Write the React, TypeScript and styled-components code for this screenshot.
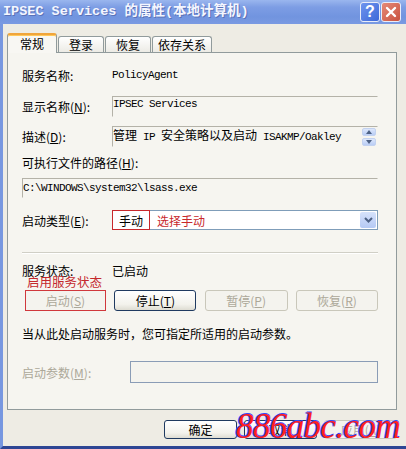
import React from 'react';
import styled, { createGlobalStyle, css } from 'styled-components';

const GlobalStyle = createGlobalStyle`
  html, body { margin: 0; padding: 0; background: #eeece4; }
  body {
    font-family: "Noto Sans CJK SC", "Liberation Sans", sans-serif;
    font-size: 12px;
    color: #000;
  }
  #root { width: 406px; height: 449px; }
`;

const Window = styled.div`
  position: relative;
  width: 406px;
  height: 449px;
  display: flex;
  flex-direction: column;
  overflow: hidden;
  background: #eeece4;
`;

const TitleBar = styled.div`
  height: 24px;
  flex: none;
  display: flex;
  align-items: center;
  padding: 0 5px 0 3px;
  background: linear-gradient(#9ab6ee 0%, #7d9de4 30%, #7194df 70%, #7a9ae2 100%);
`;

const TitleText = styled.div`
  flex: 1;
  font-family: "Liberation Mono", "Noto Sans CJK SC", monospace;
  font-size: 13.5px;
  font-weight: bold;
  color: #f4f6ff;
  text-shadow: 1px 1px 0 #5a72b8;
  white-space: nowrap;
  line-height: 24px;
`;

const CapButton = styled.div<{ $kind: 'help' | 'close' }>`
  width: 18px;
  height: 18px;
  margin-left: 1px;
  border: 1px solid #e8ecf8;
  border-radius: 3px;
  display: flex;
  align-items: center;
  justify-content: center;
  color: #fff;
  font-family: "Liberation Sans", sans-serif;
  font-weight: bold;
  font-size: 16px;
  ${(p) =>
    p.$kind === 'help'
      ? css`background: linear-gradient(135deg, #6f95ee, #3c68d8);`
      : css`background: linear-gradient(135deg, #e58a78, #c9523f);`}
`;

const Frame = styled.div`
  flex: 1;
  display: flex;
  flex-direction: column;
  border-left: 3px solid #7797e0;
  border-bottom: 3px solid #2e4694;
  padding: 9px 9px 0 4px;
`;

const TabBar = styled.div`
  display: flex;
  align-items: flex-end;
  height: 20px;
  margin-bottom: -1px;
  position: relative;
  z-index: 1;
`;

const Tab = styled.div<{ $active?: boolean; $w: number }>`
  box-sizing: border-box;
  width: ${(p) => p.$w}px;
  margin-right: 1px;
  border: 1px solid #919b9c;
  border-bottom: none;
  border-radius: 3px 3px 0 0;
  display: flex;
  align-items: center;
  justify-content: center;
  font-size: 12px;
  ${(p) =>
    p.$active
      ? css`
          height: 20px;
          background: #f8f7f3;
          border-top: 2px solid #f0a53c;
          box-shadow: inset 0 1px 0 #ffc85a;
          padding-bottom: 2px;
        `
      : css`
          height: 16px;
          background: linear-gradient(#ffffff, #ecebe5);
          margin-bottom: 1px;
        `}
`;

const Panel = styled.div`
  box-sizing: border-box;
  height: 358px;
  border: 1px solid #919b9c;
  background: #f6f5f0;
  display: flex;
  flex-direction: column;
  padding: 0 18px 0 14px;
  position: relative;
`;

const Row = styled.div<{ $mt: number; $h: number }>`
  display: flex;
  align-items: center;
  margin-top: ${(p) => p.$mt}px;
  height: ${(p) => p.$h}px;
  flex: none;
`;

const Label = styled.div<{ $w?: number; $disabled?: boolean }>`
  width: ${(p) => (p.$w ? `${p.$w}px` : 'auto')};
  flex: none;
  white-space: nowrap;
  color: ${(p) => (p.$disabled ? '#aca899' : '#000')};
`;

const Mono = styled.span`
  font-family: "Liberation Mono", monospace;
  font-size: 11px;
  letter-spacing: -0.6px;
`;

const ReadBox = styled.div<{ $align?: 'top' | 'center' }>`
  flex: 1;
  align-self: stretch;
  box-sizing: border-box;
  border: 1px solid;
  border-color: #b4b2a8 #f6f5f0 #f6f5f0 #b4b2a8;
  display: flex;
  align-items: ${(p) => (p.$align === 'top' ? 'flex-start' : 'center')};
  padding: ${(p) => (p.$align === 'top' ? '1px 0 0 0' : '0')};
  white-space: nowrap;
  position: relative;
`;

const Spin = styled.div`
  position: absolute;
  right: 1px;
  top: 1px;
  display: flex;
  flex-direction: column;
  gap: 2px;
`;

const SpinBtn = styled.div`
  width: 14px;
  height: 8px;
  border-radius: 2px;
  background: linear-gradient(#dde7fb, #b9cdf5);
  border: 1px solid #c3d2f0;
  box-sizing: border-box;
  display: flex;
  align-items: center;
  justify-content: center;
`;

const Combo = styled.div`
  flex: 1;
  align-self: stretch;
  box-sizing: border-box;
  border: 1px solid #7f9db9;
  background: #fff;
  display: flex;
  align-items: stretch;
`;

const Marked = styled.div`
  border: 1px solid #c8282c;
  margin: -1px 0 -1px -1px;
  width: 36px;
  display: flex;
  align-items: center;
  justify-content: center;
`;

const RedText = styled.span`
  color: #c8282c;
  font-size: 12px;
`;

const ComboText = styled.div`
  flex: 1;
  display: flex;
  align-items: center;
  padding-left: 7px;
`;

const ComboArrow = styled.div`
  width: 16px;
  margin: 1px;
  border-radius: 2px;
  background: linear-gradient(#d6e2fb, #b5c9f4);
  display: flex;
  align-items: center;
  justify-content: center;
`;

const Separator = styled.div<{ $mt: number }>`
  margin-top: ${(p) => p.$mt}px;
  height: 1px;
  border-bottom: 1px solid #ffffff;
  background: #d0cfc6;
  flex: none;
`;

const Annotation = styled.div`
  position: absolute;
  left: 19px;
  top: 221px;
  color: #c4282c;
  font-size: 12.5px;
  line-height: 16px;
`;

const ButtonRow = styled.div`
  display: flex;
  justify-content: space-between;
  margin: 12px 0 0 3px;
  height: 21px;
  flex: none;
`;

const Btn = styled.div<{ $w: number; $disabled?: boolean; $mark?: boolean }>`
  box-sizing: border-box;
  width: ${(p) => p.$w}px;
  height: 100%;
  border-radius: 3px;
  display: flex;
  align-items: center;
  justify-content: center;
  font-size: 12px;
  ${(p) =>
    p.$disabled
      ? css`
          border: 1px solid #c9c7ba;
          color: #aca899;
          background: #f4f3ee;
        `
      : css`
          border: 1px solid #1f3a60;
          color: #000;
          background: linear-gradient(#ffffff 0%, #f3f2ec 70%, #dedcd2 100%);
        `}
  ${(p) =>
    p.$mark &&
    css`
      border: 1px solid #d0383c;
      border-radius: 0;
    `}
`;

const ParamBox = styled.div`
  margin-left: 42px;
  flex: 1;
  align-self: stretch;
  box-sizing: border-box;
  border: 1px solid #8a9cb6;
  background: #f4f3ee;
`;

const ButtonBar = styled.div`
  display: flex;
  justify-content: flex-end;
  gap: 7px;
  margin-top: 10px;
  height: 19px;
`;

const Watermark = styled.div`
  position: absolute;
  left: 236px;
  top: 407px;
  font-family: "Liberation Serif", serif;
  font-style: italic;
  font-size: 35px;
  line-height: 40px;
  letter-spacing: -0.6px;
  color: #ff2020;
  text-shadow: -1.5px 0 0 #3448ff, 0 -1px 0 #3448ff;
  pointer-events: none;
  white-space: nowrap;
`;

const Acc = ({ k }: { k: string }) => (
  <>
    (<u>{k}</u>)
  </>
);

export default function App() {
  return (
    <>
      <GlobalStyle />
      <Window>
        <TitleBar>
          <TitleText>IPSEC Services 的属性(本地计算机)</TitleText>
          <CapButton $kind="help">?</CapButton>
          <CapButton $kind="close">
            <svg width="12" height="12" viewBox="0 0 12 12">
              <path d="M2 2 L10 10 M10 2 L2 10" stroke="#fff" strokeWidth="2.4" strokeLinecap="round" />
            </svg>
          </CapButton>
        </TitleBar>
        <Frame>
          <TabBar>
            <Tab $active $w={50}>常规</Tab>
            <Tab $w={46}>登录</Tab>
            <Tab $w={46}>恢复</Tab>
            <Tab $w={60}>依存关系</Tab>
          </TabBar>
          <Panel>
            <Row $mt={14} $h={16}>
              <Label $w={90}>服务名称:</Label>
              <Mono>PolicyAgent</Mono>
            </Row>
            <Row $mt={13} $h={21}>
              <Label $w={90}>
                显示名称<Acc k="N" />:
              </Label>
              <ReadBox $align="top">
                <Mono>IPSEC Services</Mono>
              </ReadBox>
            </Row>
            <Row $mt={9} $h={21}>
              <Label $w={90}>
                描述<Acc k="D" />:
              </Label>
              <ReadBox $align="top">
                <span style={{ lineHeight: '13px' }}>
                  管理<Mono> IP </Mono>安全策略以及启动<Mono> ISAKMP/Oakley</Mono>
                </span>
                <Spin>
                  <SpinBtn>
                    <svg width="6" height="4" viewBox="0 0 6 4">
                      <path d="M0 4 L3 0 L6 4 Z" fill="#4d6185" />
                    </svg>
                  </SpinBtn>
                  <SpinBtn>
                    <svg width="6" height="4" viewBox="0 0 6 4">
                      <path d="M0 0 L3 4 L6 0 Z" fill="#4d6185" />
                    </svg>
                  </SpinBtn>
                </Spin>
              </ReadBox>
            </Row>
            <Row $mt={7} $h={16}>
              <Label>
                可执行文件的路径<Acc k="H" />:
              </Label>
            </Row>
            <Row $mt={8} $h={20}>
              <ReadBox>
                <Mono>C:\WINDOWS\system32\lsass.exe</Mono>
              </ReadBox>
            </Row>
            <Row $mt={12} $h={20}>
              <Label $w={90}>
                启动类型<Acc k="E" />:
              </Label>
              <Combo>
                <Marked>手动</Marked>
                <ComboText>
                  <RedText>选择手动</RedText>
                </ComboText>
                <ComboArrow>
                  <svg width="9" height="6" viewBox="0 0 9 6">
                    <path d="M1 1 L4.5 4.5 L8 1" stroke="#4d6185" strokeWidth="2" fill="none" />
                  </svg>
                </ComboArrow>
              </Combo>
            </Row>
            <Separator $mt={22} />
            <Row $mt={8} $h={16}>
              <Label $w={90}>服务状态:</Label>
              <span>已启动</span>
            </Row>
            <Annotation>启用服务状态</Annotation>
            <ButtonRow>
              <Btn $w={81} $disabled $mark>
                启动<Acc k="S" />
              </Btn>
              <Btn $w={82}>
                停止<Acc k="T" />
              </Btn>
              <Btn $w={83} $disabled>
                暂停<Acc k="P" />
              </Btn>
              <Btn $w={82} $disabled>
                恢复<Acc k="R" />
              </Btn>
            </ButtonRow>
            <Row $mt={14} $h={16}>
              <Label>当从此处启动服务时，您可指定所适用的启动参数。</Label>
            </Row>
            <Row $mt={20} $h={22}>
              <Label $w={66} $disabled>
                启动参数<Acc k="M" />:
              </Label>
              <ParamBox />
            </Row>
          </Panel>
          <ButtonBar>
            <Btn $w={73}>确定</Btn>
            <Btn $w={73}>取消</Btn>
            <Btn $w={73} $disabled>
              应用<Acc k="A" />
            </Btn>
          </ButtonBar>
        </Frame>
        <Watermark>886abc.com</Watermark>
      </Window>
    </>
  );
}
